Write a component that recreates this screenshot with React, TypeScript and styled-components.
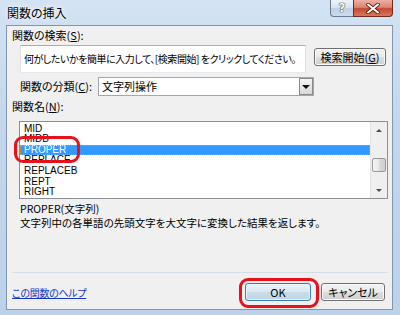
import React from "react";
import styled, { createGlobalStyle, css } from "styled-components";

const functionNames = ["MID", "MIDB", "PROPER", "REPLACE", "REPLACEB", "REPT", "RIGHT"];
const selectedName = "PROPER";

const App: React.FC = () => {
  return (
    <>
      <GlobalStyle />
      <Window>
        <TitleBar>
          <Title>関数の挿入</Title>
          <CaptionButtons>
            <CaptionButton $kind="help">
              <HelpGlyph>?</HelpGlyph>
            </CaptionButton>
            <CaptionButton $kind="close">
              <svg width="14" height="11" viewBox="0 0 14 11">
                <path d="M2 1.5 L12 9.5 M12 1.5 L2 9.5" stroke="#5a1e14" strokeWidth="3.6" strokeLinecap="round" />
                <path d="M2 1.5 L12 9.5 M12 1.5 L2 9.5" stroke="#ffffff" strokeWidth="2" strokeLinecap="round" />
              </svg>
            </CaptionButton>
          </CaptionButtons>
        </TitleBar>

        <Client>
          <FieldLabel>
            関数の検索(<u>S</u>):
          </FieldLabel>
          <SearchRow>
            <SearchBox>
              何がしたいかを簡単に入力して、[検索開始] をクリックしてください。
            </SearchBox>
            <PushButton $width={72} $top={3}>
              検索開始(<u>G</u>)
            </PushButton>
          </SearchRow>

          <CategoryRow>
            <FieldLabel>
              関数の分類(<u>C</u>):
            </FieldLabel>
            <Combo>
              <ComboText>文字列操作</ComboText>
              <DropButton>
                <DownTriangle />
              </DropButton>
            </Combo>
          </CategoryRow>

          <NameLabel>
            関数名(<u>N</u>):
          </NameLabel>
          <ListWrap>
            <ListBox>
              <Items>
                {functionNames.map((name) => (
                  <Item key={name} $selected={name === selectedName}>
                    {name}
                  </Item>
                ))}
              </Items>
              <ScrollBar>
                <ScrollArrow>
                  <ArrowUp />
                </ScrollArrow>
                <Track>
                  <Thumb $offset={20} />
                </Track>
                <ScrollArrow>
                  <ArrowDown />
                </ScrollArrow>
              </ScrollBar>
            </ListBox>
            <Ring $left={-5} $top={15} $width={66} $height={27} />
          </ListWrap>

          <Description>
            <p>PROPER(文字列)</p>
            <p>文字列中の各単語の先頭文字を大文字に変換した結果を返します。</p>
          </Description>

          <Separator />
          <Footer>
            <HelpLink href="#">この関数のヘルプ</HelpLink>
            <ButtonGroup>
              <OkSlot>
                <PushButton $width={66} $primary>
                  OK
                </PushButton>
                <Ring $left={-6} $top={-5} $width={80} $height={30} />
              </OkSlot>
              <PushButton $width={64}>キャンセル</PushButton>
            </ButtonGroup>
          </Footer>
        </Client>
      </Window>
    </>
  );
};

export default App;

const GlobalStyle = createGlobalStyle`
  html, body {
    margin: 0;
    padding: 0;
    background: #ffffff;
  }
  body {
    font-family: "Noto Sans CJK JP", "Noto Sans", sans-serif;
    font-feature-settings: "palt";
  }
  p {
    margin: 0;
  }
`;

const Window = styled.div`
  width: 400px;
  height: 315px;
  box-sizing: border-box;
  padding: 0 7px 5px 6px;
  display: flex;
  flex-direction: column;
  background: linear-gradient(180deg, #d3e3f4 0%, #c2d7ed 40%, #bcd2ea 100%);
`;

const TitleBar = styled.div`
  height: 25px;
  flex-shrink: 0;
  display: flex;
  justify-content: space-between;
  align-items: flex-start;
`;

const Title = styled.div`
  padding-left: 1px;
  font-size: 12px;
  line-height: 25px;
  color: #000;
  text-shadow: 0 0 6px rgba(255, 255, 255, 0.95), 0 0 3px rgba(255, 255, 255, 0.9);
`;

const CaptionButtons = styled.div`
  display: flex;
  height: 17px;
`;

const CaptionButton = styled.div<{ $kind: "help" | "close" }>(
  (props) => css`
    box-sizing: border-box;
    height: 17px;
    display: flex;
    align-items: center;
    justify-content: center;
    border: 1px solid;
    border-top: none;
    ${props.$kind === "help"
      ? css`
          width: 23px;
          border-color: #6b7b8f;
          border-right: none;
          border-radius: 0 0 0 4px;
          background: linear-gradient(180deg, #edf3f9 0%, #d7e3ef 48%, #bfd0e2 52%, #cddced 100%);
        `
      : css`
          width: 40px;
          border-color: #6e2a20;
          border-radius: 0 0 4px 0;
          background: linear-gradient(180deg, #eab0a4 0%, #dc8470 46%, #c6492f 54%, #d8775b 100%);
        `}
  `
);

const HelpGlyph = styled.span`
  font-family: "DejaVu Sans", sans-serif;
  font-size: 12px;
  font-weight: bold;
  line-height: 15px;
  color: #f7f9fb;
  text-shadow: 0 0 1px #3a4656, 0 0 1px #3a4656, 0 0 1px #3a4656;
`;

const Client = styled.div`
  flex: 1;
  display: flex;
  flex-direction: column;
  padding: 3px 4px 0 5px;
  background: #f0f0f0;
  border: 1px solid #8596ab;
`;

const FieldLabel = styled.div`
  font-size: 11px;
  line-height: 13px;
  color: #000;
  white-space: nowrap;
`;

const SearchRow = styled.div`
  display: flex;
  align-items: flex-start;
  margin-top: 3px;
  padding-left: 8px;
`;

const SearchBox = styled.div`
  width: 286px;
  height: 28px;
  box-sizing: border-box;
  padding: 6px 3px;
  background: #fff;
  border: 1px solid;
  border-color: #abadb3 #dbdfe6 #e3e9ef #e2e3ea;
  font-size: 10px;
  letter-spacing: -0.45px;
  line-height: 13px;
  white-space: nowrap;
  overflow: hidden;
`;

const PushButton = styled.button<{ $width: number; $top?: number; $primary?: boolean }>(
  (props) => css`
    width: ${props.$width}px;
    height: 18px;
    margin: ${props.$top ?? 0}px 0 0 ${props.$top !== undefined ? 8 : 0}px;
    padding: 0;
    box-sizing: border-box;
    font-family: inherit;
    font-feature-settings: "palt";
    font-size: 11px;
    line-height: 14px;
    color: #000;
    border-radius: 3px;
    border: 1px solid ${props.$primary ? "#3c7fb1" : "#707070"};
    box-shadow: inset 0 0 0 1px ${props.$primary ? "#e6f2fa" : "#fbfbfb"};
    background: ${props.$primary
      ? "linear-gradient(180deg, #eaf3f9 0%, #dbe8f1 48%, #c9dcea 52%, #bed5e6 100%)"
      : "linear-gradient(180deg, #f2f2f2 0%, #ebebeb 48%, #dddddd 52%, #cfcfcf 100%)"};
  `
);

const CategoryRow = styled.div`
  display: flex;
  align-items: center;
  justify-content: space-between;
  width: 294px;
  margin-top: 4px;
  padding-left: 8px;
`;

const Combo = styled.div`
  width: 216px;
  height: 19px;
  box-sizing: border-box;
  display: flex;
  align-items: center;
  background: #fff;
  border: 1px solid #a5a7ad;
`;

const ComboText = styled.span`
  flex: 1;
  padding-left: 3px;
  font-size: 11px;
  line-height: 13px;
`;

const DropButton = styled.div`
  width: 14px;
  height: 17px;
  box-sizing: border-box;
  display: flex;
  align-items: center;
  justify-content: center;
  border: 1px solid #8a8a8a;
  background: linear-gradient(180deg, #f4f4f4 0%, #e6e6e6 50%, #d8d8d8 100%);
`;

const DownTriangle = styled.span`
  width: 0;
  height: 0;
  border-left: 4px solid transparent;
  border-right: 4px solid transparent;
  border-top: 4px solid #111;
`;

const NameLabel = styled(FieldLabel)`
  margin-top: 4px;
`;

const ListWrap = styled.div`
  position: relative;
  height: 78px;
  margin: 8px 0 0 7px;
`;

const ListBox = styled.div`
  height: 100%;
  box-sizing: border-box;
  display: flex;
  background: #fff;
  border: 1px solid #8c8f96;
`;

const Items = styled.div`
  flex: 1;
  padding-top: 1.5px;
`;

const Item = styled.div<{ $selected?: boolean }>(
  (props) => css`
    height: 10.67px;
    padding-left: 4px;
    font-family: "Liberation Sans", Arial, sans-serif;
    font-size: 10px;
    line-height: 10.67px;
    color: ${props.$selected ? "#fff" : "#000"};
    background: ${props.$selected ? "#3399ff" : "transparent"};
    outline: ${props.$selected ? "1px dotted #d8944a" : "none"};
    outline-offset: -1px;
  `
);

const ScrollBar = styled.div`
  width: 16px;
  display: flex;
  flex-direction: column;
  background: #efefef;
  border-left: 1px solid #e4e4e4;
`;

const ScrollArrow = styled.div`
  height: 16px;
  display: flex;
  align-items: center;
  justify-content: center;
`;

const ArrowUp = styled.span`
  width: 0;
  height: 0;
  border-left: 3px solid transparent;
  border-right: 3px solid transparent;
  border-bottom: 3px solid #4d4d4d;
`;

const ArrowDown = styled.span`
  width: 0;
  height: 0;
  border-left: 3px solid transparent;
  border-right: 3px solid transparent;
  border-top: 3px solid #4d4d4d;
`;

const Track = styled.div`
  flex: 1;
  padding: 0 1px;
`;

const Thumb = styled.div<{ $offset: number }>`
  margin-top: ${(p) => p.$offset}px;
  height: 14px;
  box-sizing: border-box;
  border: 1px solid #9a9a9a;
  border-radius: 2px;
  background: linear-gradient(90deg, #f3f3f3 0%, #e9e9e9 50%, #d9d9d9 51%, #d0d0d0 100%);
`;

const Ring = styled.div<{ $left: number; $top: number; $width: number; $height: number }>(
  (props) => css`
    position: absolute;
    left: ${props.$left}px;
    top: ${props.$top}px;
    width: ${props.$width}px;
    height: ${props.$height}px;
    box-sizing: border-box;
    border: 3px solid #e8101a;
    border-radius: 9px;
    pointer-events: none;
  `
);

const Description = styled.div`
  margin-top: 3px;
  padding-left: 8px;
  font-size: 10.5px;
  line-height: 14px;
  color: #000;
`;

const Separator = styled.div`
  margin-top: auto;
  border-top: 1px solid #d3dde6;
`;

const Footer = styled.div`
  display: flex;
  align-items: center;
  padding: 10px 3px 8px 0;
`;

const HelpLink = styled.a`
  font-size: 10px;
  letter-spacing: -0.3px;
  line-height: 13px;
  color: #1536cc;
  text-decoration: underline;
`;

const ButtonGroup = styled.div`
  margin-left: auto;
  display: flex;
  gap: 10px;
`;

const OkSlot = styled.div`
  position: relative;
  display: flex;
`;
